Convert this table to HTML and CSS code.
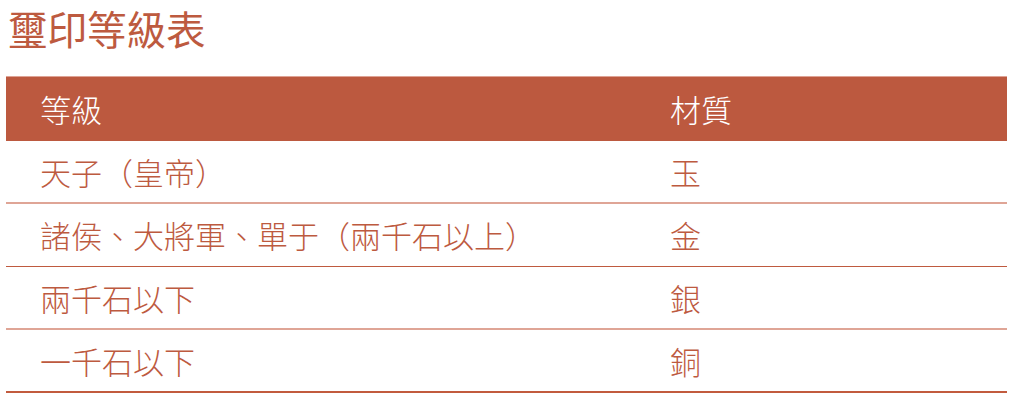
FILE: index.html
```html
<!DOCTYPE html>
<html lang="zh-Hant">
<head>
<meta charset="utf-8">
<link rel="stylesheet" href="styles.css">
</head>
<body>
<h1 class="title">璽印等級表</h1>
<div class="table">
  <div class="row head">
    <div class="cell">等級</div>
    <div class="cell">材質</div>
  </div>
  <div class="row light">
    <div class="cell">天子（皇帝）</div>
    <div class="cell">玉</div>
  </div>
  <div class="row dark">
    <div class="cell">諸侯、大將軍、單于（兩千石以上）</div>
    <div class="cell">金</div>
  </div>
  <div class="row light">
    <div class="cell">兩千石以下</div>
    <div class="cell">銀</div>
  </div>
  <div class="row last">
    <div class="cell">一千石以下</div>
    <div class="cell">銅</div>
  </div>
</div>
</body>
</html>
```

FILE: styles.css
```css
html, body {
  margin: 0;
  padding: 0;
  background: #ffffff;
}
body {
  font-family: "Noto Sans CJK TC", "Noto Sans CJK SC", sans-serif;
  color: #bd5a3f;
}
.title {
  margin: 0;
  padding: 5px 0 0 8px;
  height: 76px;
  box-sizing: border-box;
  font-size: 39.5px;
  font-weight: 400;
  line-height: 46px;
  color: #bd5a3f;
}
.table {
  margin-left: 6px;
  width: 1001px;
  display: flex;
  flex-direction: column;
}
.row {
  display: grid;
  grid-template-columns: 630px 1fr;
  align-items: center;
  box-sizing: border-box;
  height: 63px;
}
.cell {
  padding-left: 34px;
  font-size: 31px;
  font-weight: 300;
  line-height: 40px;
}
.head {
  height: 65px;
  background: #bc593f;
  border-top: 1px solid #dea395;
  color: #ffffff;
}
.light {
  border-bottom: 2px solid #dfa596;
}
.dark {
  border-bottom: 1px solid #bf5a3f;
}
.last {
  border-bottom: 2px solid #c25b3e;
}
```
